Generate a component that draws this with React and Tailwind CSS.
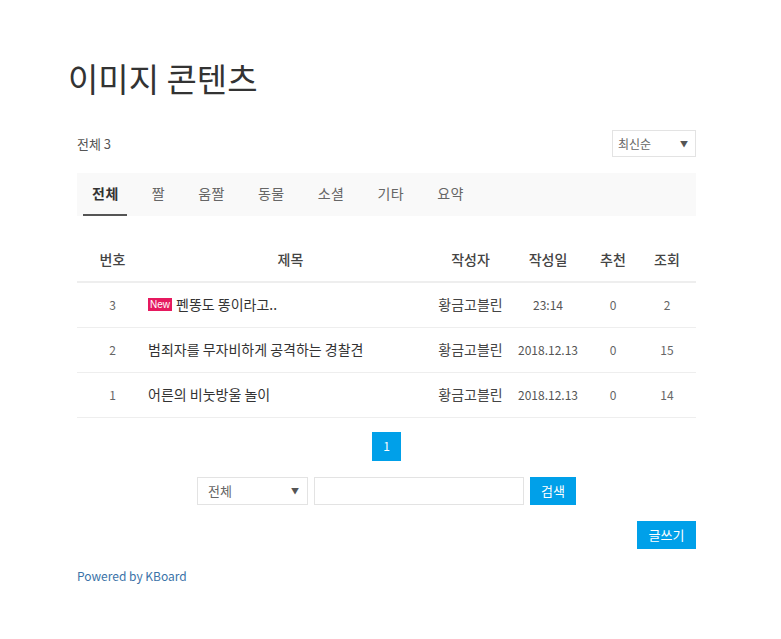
import React from 'react';

const font = { fontFamily: '"Noto Sans CJK KR", "Noto Sans", sans-serif' };

const tabs = ['전체', '짤', '움짤', '동물', '소셜', '기타', '요약'];

const rows = [
  { no: 3, title: '펜똥도 똥이라고..', isNew: true, author: '황금고블린', date: '23:14', vote: 0, view: 2 },
  { no: 2, title: '범죄자를 무자비하게 공격하는 경찰견', author: '황금고블린', date: '2018.12.13', vote: 0, view: 15 },
  { no: 1, title: '어른의 비눗방울 놀이', author: '황금고블린', date: '2018.12.13', vote: 0, view: 14 },
];

function App() {
  return (
    <div className="min-h-screen bg-white" style={font}>
      <div className="w-[619px] ml-[77px] pt-[58px] text-[#545454]">
        {/* Title */}
        <h1 className="ml-[-9px] h-[40px] leading-[40px] text-[33px] text-[#333]">이미지 콘텐츠</h1>

        {/* Count + sort */}
        <div className="mt-[32px] flex justify-between items-center h-[27px]">
          <div className="text-[13px] text-[#555]">전체 3</div>
          <div className="w-[84px] h-[27px] border border-[#e3e3e3] flex items-center justify-between pl-[5px] pr-[7px] text-[12px] text-[#666]">
            <span>최신순</span>
            <span className="text-[8px] text-[#555]">▼</span>
          </div>
        </div>

        {/* Tabs */}
        <div className="mt-[16px] h-[43px] bg-[#f9f9f9] flex pl-[6px]">
          {tabs.map((t, i) => (
            <div
              key={t}
              className={`h-full pl-[9px] pr-[8px] mr-[16px] flex items-center text-[14px] tracking-[0.5px] border-b-2 ${
                i === 0 ? 'border-[#555] text-[#333] font-bold' : 'border-transparent text-[#666]'
              }`}
            >
              {t}
            </div>
          ))}
        </div>

        {/* Table */}
        <table className="mt-[21px] w-full text-[14px] table-fixed border-collapse">
          <colgroup>
            <col className="w-[71px]" />
            <col />
            <col className="w-[75px]" />
            <col className="w-[80px]" />
            <col className="w-[50px]" />
            <col className="w-[58px]" />
          </colgroup>
          <thead>
            <tr className="h-[45px] border-b-2 border-[#eee] text-[#444]">
              <th className="font-medium">번호</th>
              <th className="font-medium">제목</th>
              <th className="font-medium">작성자</th>
              <th className="font-medium">작성일</th>
              <th className="font-medium">추천</th>
              <th className="font-medium">조회</th>
            </tr>
          </thead>
          <tbody>
            {rows.map((r) => (
              <tr key={r.no} className="h-[45px] border-b border-[#eee]">
                <td className="text-center text-[12px] text-[#666]">{r.no}</td>
                <td className="text-[#333]">
                  <span className="flex items-center">
                    {r.isNew && (
                      <span className="mr-[4px] bg-[#e6195f] text-white text-[10px] leading-[13px] px-[2px] font-medium" style={{ fontFamily: '"Liberation Sans", Arial, sans-serif' }}>
                        New
                      </span>
                    )}
                    {r.title}
                  </span>
                </td>
                <td className="text-center text-[#444]">{r.author}</td>
                <td className="text-center text-[12px] text-[#555]">{r.date}</td>
                <td className="text-center text-[12px] text-[#666]">{r.vote}</td>
                <td className="text-center text-[12px] text-[#666]">{r.view}</td>
              </tr>
            ))}
          </tbody>
        </table>

        {/* Pagination */}
        <div className="mt-[14px] flex justify-center">
          <div className="w-[29px] h-[29px] bg-[#00a0e9] text-white text-[12px] flex items-center justify-center">1</div>
        </div>

        {/* Search */}
        <div className="mt-[16px] flex justify-center gap-[6px] h-[28px]">
          <div className="w-[111px] h-full border border-[#e3e3e3] flex items-center justify-between pl-[10px] pr-[8px] text-[13px] text-[#666]">
            <span>전체</span>
            <span className="text-[8px] text-[#555]">▼</span>
          </div>
          <div className="w-[210px] h-full border border-[#e3e3e3]" />
          <div className="w-[46px] h-full bg-[#00a0e9] text-white text-[13px] flex items-center justify-center">검색</div>
        </div>

        {/* Write */}
        <div className="mt-[16px] flex justify-end">
          <div className="w-[59px] h-[28px] bg-[#00a0e9] text-white text-[13px] flex items-center justify-center">글쓰기</div>
        </div>

        {/* Footer */}
        <div className="mt-[18px] text-[12px] leading-[18px] text-[#3b73a8]">Powered by KBoard</div>
      </div>
    </div>
  );
}

export default App;
